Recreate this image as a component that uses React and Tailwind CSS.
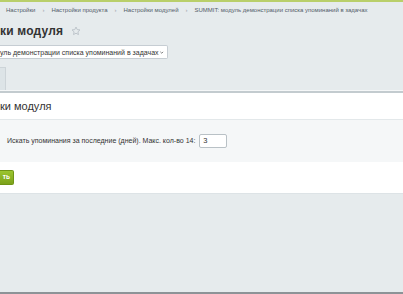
import React from 'react';

const crumbs = ['Настройки', 'Настройки продукта', 'Настройки модулей', 'SUMMIT: модуль демонстрации списка упоминаний в задачах'];

export default function App() {
  return (
    <div
      className="w-[403px] h-[294px] overflow-hidden bg-[#e6ebed] flex flex-col text-[#333]"
      style={{ fontFamily: '"Liberation Sans", Arial, sans-serif' }}
    >
      <div className="h-[2px] shrink-0 bg-[#b9cf6a]" />

      {/* breadcrumbs */}
      <div className="h-[17px] shrink-0 flex items-center pl-[6px] text-[6px] text-[#535c69] whitespace-nowrap">
        {crumbs.map((c, i) => (
          <React.Fragment key={i}>
            {i > 0 && <span className="mx-[7px] text-[#9aa0a8]">›</span>}
            <span>{c}</span>
          </React.Fragment>
        ))}
      </div>

      {/* title */}
      <div className="h-[23px] shrink-0 flex items-center">
        <h1 className="text-[12px] font-bold leading-none text-[#333] tracking-[0.2px]">ки модуля</h1>
        <svg className="ml-[8px] mt-[1px]" width="10" height="10" viewBox="0 0 24 24" fill="none" stroke="#b6bdc4" strokeWidth="2" strokeLinejoin="round">
          <path d="M12 2.5l2.9 6.1 6.6.8-4.9 4.6 1.3 6.6L12 17.3l-5.9 3.3 1.3-6.6-4.9-4.6 6.6-.8z" />
        </svg>
      </div>

      {/* select */}
      <div className="mt-[3px] h-[14px] w-[168px] shrink-0 bg-white border border-l-0 border-[#c6cdd3] rounded-r-[2px] flex items-center justify-between pr-[3px]">
        <span className="text-[7px] text-[#333] whitespace-nowrap leading-none">уль демонстрации списка упоминаний в задачах</span>
        <svg width="7" height="7" viewBox="0 0 10 10" fill="none" stroke="#555" strokeWidth="1.4">
          <path d="M2.5 3.8L5 6.3 7.5 3.8" />
        </svg>
      </div>

      {/* tabs */}
      <div className="mt-[8px] h-[23px] shrink-0 flex">
        <div className="w-[6px] bg-[#dde4e7] border-t border-r border-[#cdd4d8]" />
      </div>
      <div className="h-[1px] shrink-0 bg-[#f5f7f8]" />
      <div className="h-[2px] shrink-0 bg-[#c3cbcf]" />

      {/* panel */}
      <div className="shrink-0 bg-white flex flex-col">
        <div className="h-[27px] flex items-center border-b border-[#e3e8ea]">
          <span className="text-[11px] text-[#333] leading-none">ки модуля</span>
        </div>
        <div className="h-[42px] bg-[#f5f7f8] flex items-center pl-[7px]">
          <span className="text-[7px] text-[#333] whitespace-nowrap">Искать упоминания за последние (дней). Макс. кол-во 14:</span>
          <div className="ml-[4px] w-[28px] h-[14px] bg-white border border-[#b9c1c6] rounded-[2px] flex items-center pl-[3px] text-[7.5px]">3</div>
        </div>
        <div className="h-[31px] flex items-center">
          <div className="h-[15px] w-[14px] rounded-r-[2px] bg-gradient-to-b from-[#9bc52f] to-[#7ca21a] border border-l-0 border-[#6f9415] flex items-center justify-end pr-[3px]">
            <span className="text-[6.5px] font-bold text-white leading-none">ть</span>
          </div>
        </div>
      </div>
      <div className="h-[1px] shrink-0 bg-[#dde3e6]" />

      <div className="flex-1" />
      <div className="h-[2px] shrink-0 bg-[#8d9397]" />
    </div>
  );
}
